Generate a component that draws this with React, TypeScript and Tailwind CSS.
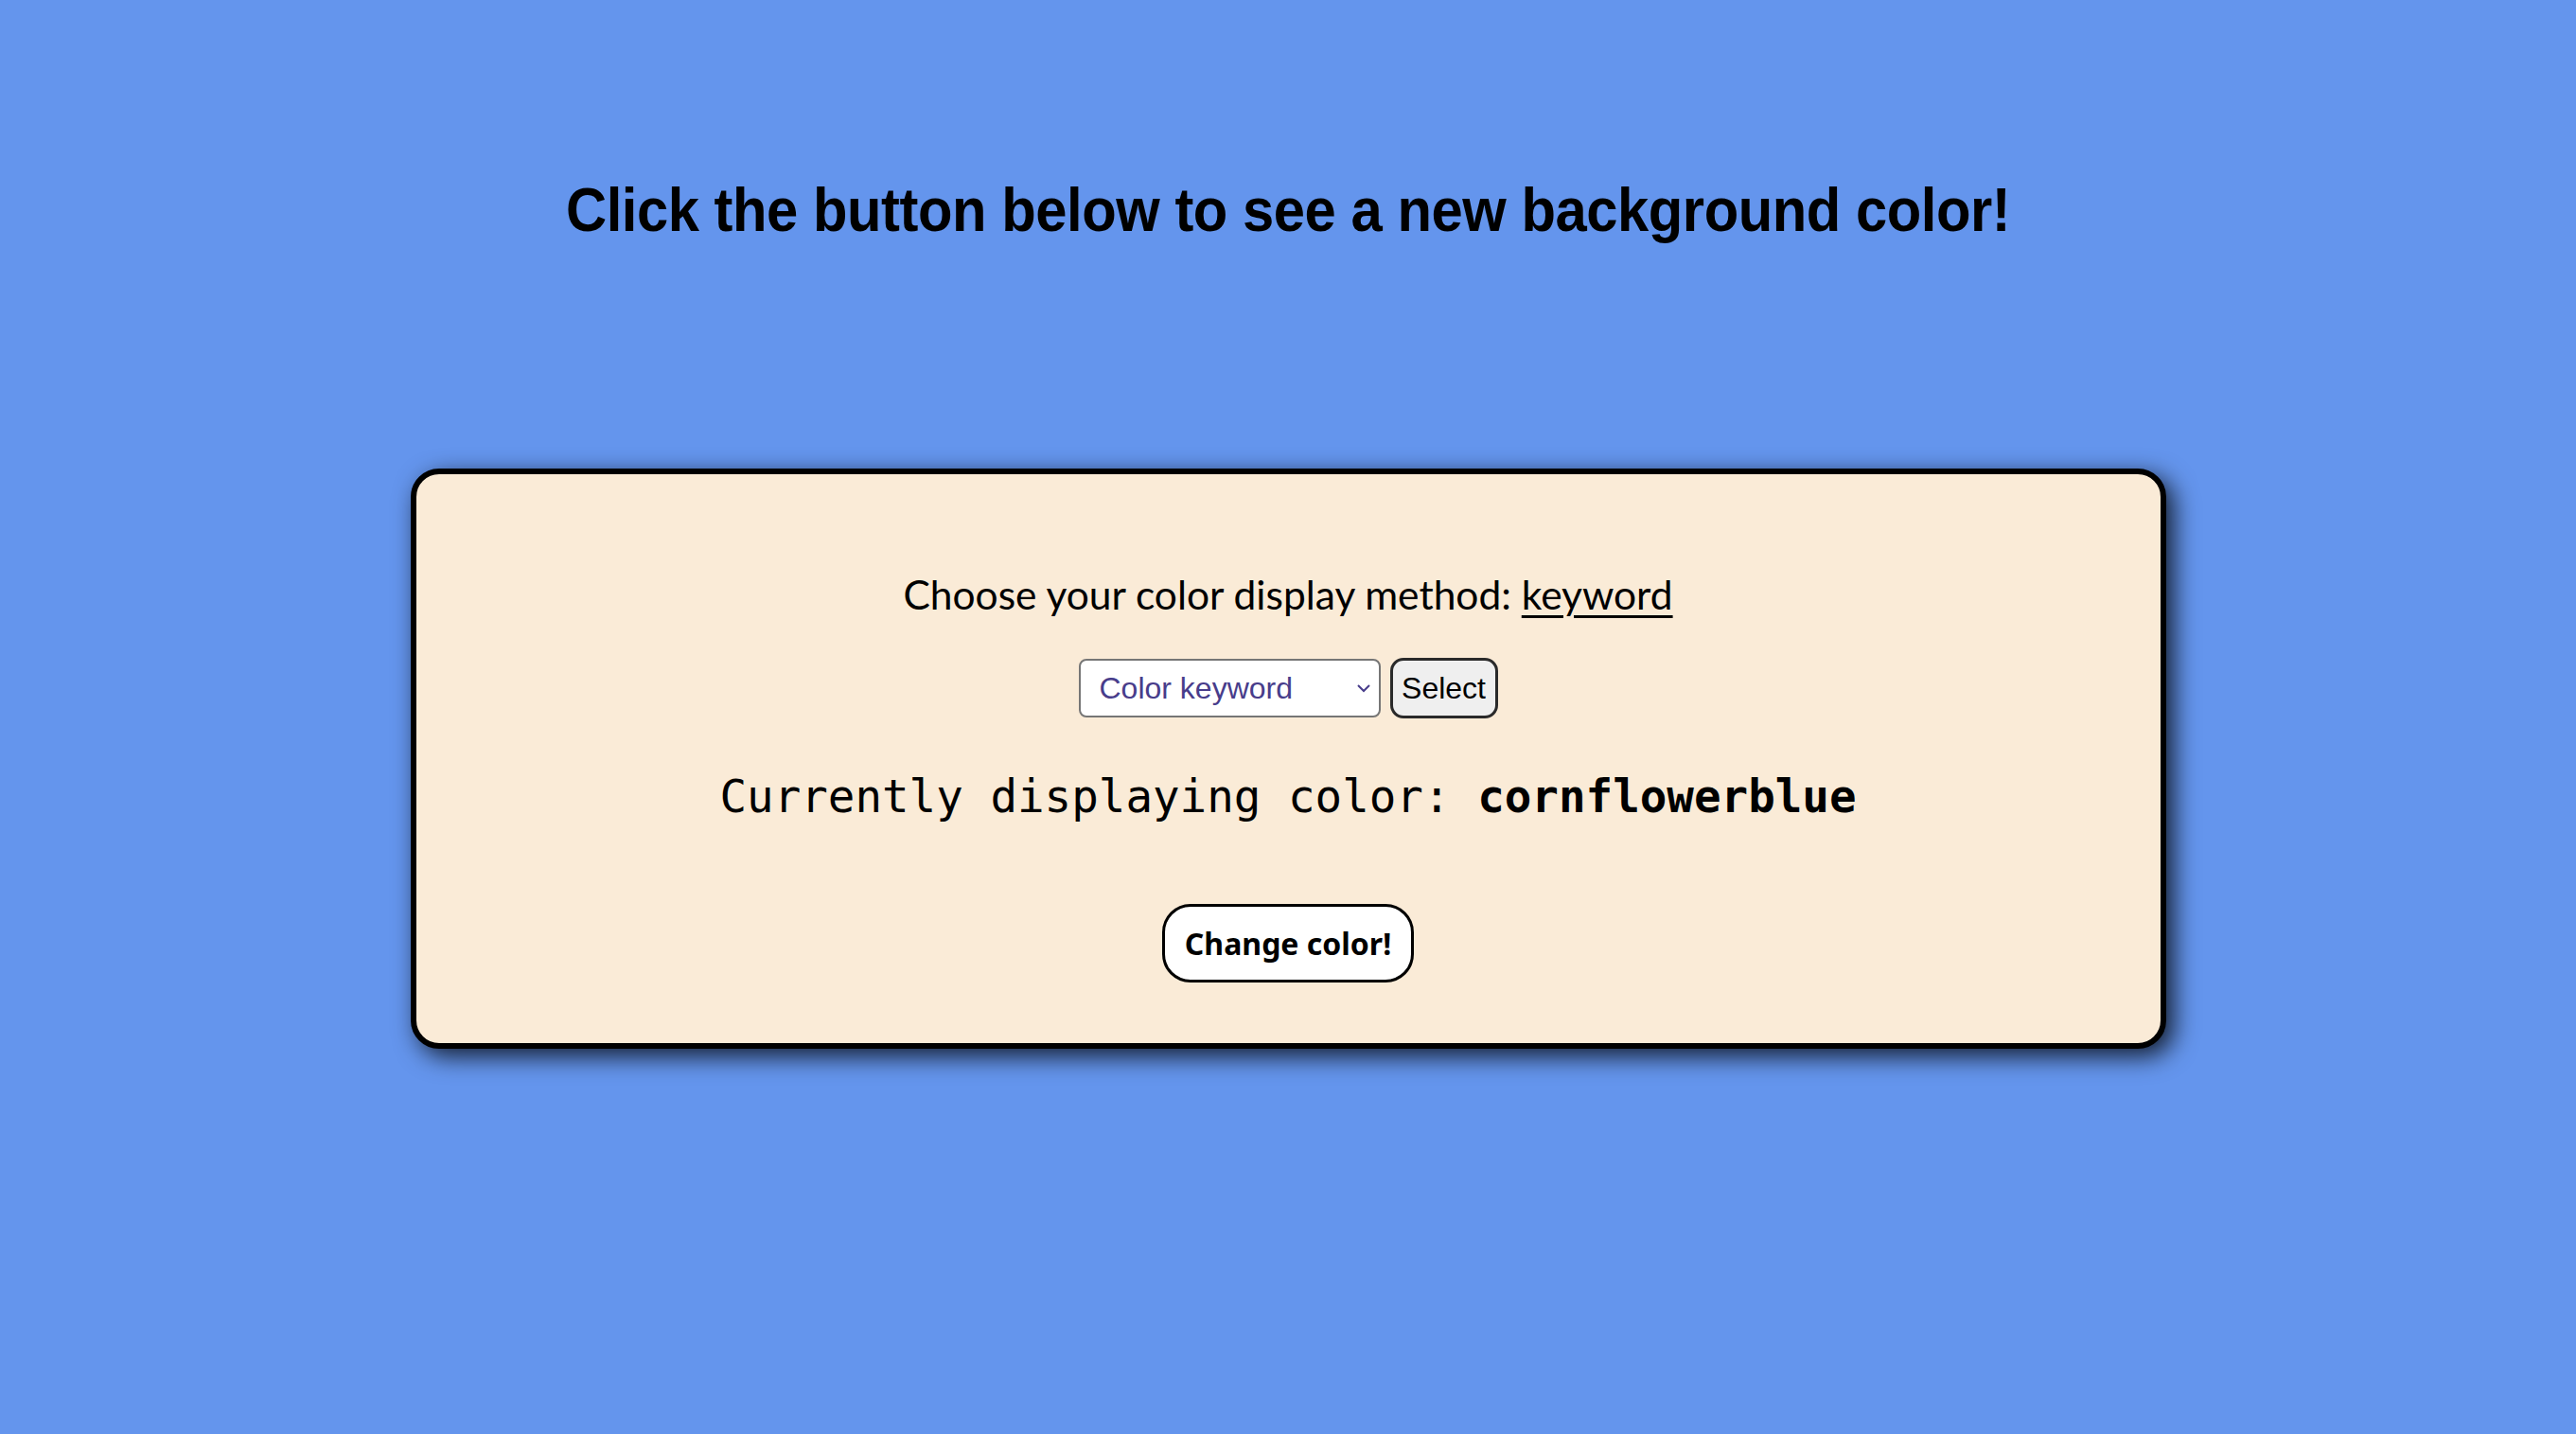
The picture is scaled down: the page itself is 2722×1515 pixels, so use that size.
import { useState } from "react";

export default function App() {
  const [method, setMethod] = useState("keyword");

  return (
    <div className="min-h-screen w-full bg-[#6495ed] pt-[196px]">
      <div className="text-center">
        <h1 className="inline-block origin-center scale-x-[0.934] text-[64px] font-bold leading-[52px] tracking-[-0.5px] text-black [font-family:'Liberation_Sans',Arial,sans-serif]">
          Click the button below to see a new background color!
        </h1>
      </div>

      <div className="mx-auto mt-[245px] flex w-[1855px] flex-col items-center rounded-[30px] border-[6px] border-black bg-[#faebd7] pb-[64px] pt-[105px] shadow-[8px_8px_26px_rgba(0,0,0,0.8)]">
        <p className="text-[42.5px] leading-[44px] text-black [font-family:Lato,'Open_Sans',sans-serif]">
          Choose your color display method: <span className="underline decoration-[3px] underline-offset-[6px]">{method}</span>
        </p>

        <div className="mt-[45px] flex items-center gap-[10px]">
          <div className="relative">
            <select
              value={method}
              onChange={(e) => setMethod(e.target.value)}
              className="h-[62px] w-[319px] appearance-none rounded-[8px] border-2 border-[#767676] bg-white pl-[20px] text-[32px] text-[#483d8b] [font-family:'Liberation_Sans',Arial,sans-serif]"
            >
              <option value="keyword">Color keyword</option>
              <option value="hex">Hex value</option>
              <option value="rgb">RGB value</option>
            </select>
            <svg className="pointer-events-none absolute right-[10px] top-[25px]" width="16" height="12" viewBox="0 0 16 12" fill="none">
              <path d="M2 3 L8 9 L14 3" stroke="#483d8b" strokeWidth="2" />
            </svg>
          </div>
          <button className="h-[64px] w-[114px] rounded-[14px] border-[3px] border-[#2a2a2a] bg-[#efefef] text-[32px] text-black [font-family:'Liberation_Sans',Arial,sans-serif]">
            Select
          </button>
        </div>

        <p className="mt-[55px] text-[47.5px] leading-[56px] text-black [font-family:'DejaVu_Sans_Mono',monospace]">
          Currently displaying color: <span className="font-bold">cornflowerblue</span>
        </p>

        <button className="mt-[85px] h-[83px] w-[266px] rounded-[30px] border-[3px] border-black bg-white text-[32px] font-bold text-black [font-family:'Noto_Sans','Open_Sans',sans-serif]">
          Change color!
        </button>
      </div>
    </div>
  );
}
